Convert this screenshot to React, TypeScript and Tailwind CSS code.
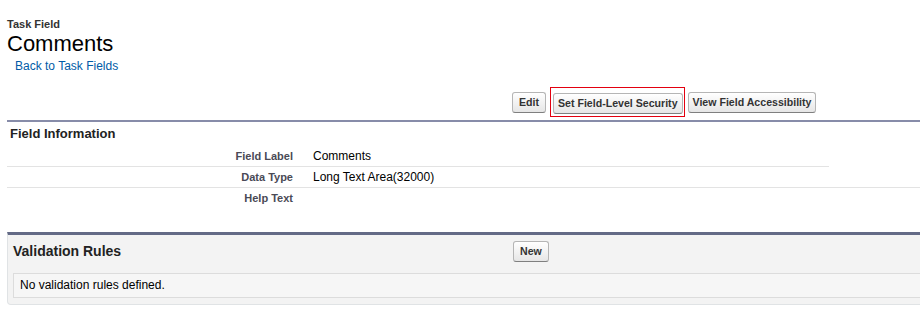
export default function App() {
  const btn =
    "rounded-[3px] border border-[#b5b5b5] border-b-[#7f7f7f] bg-gradient-to-b from-white to-[#e6e6e6] text-[10.6px] font-bold leading-[19px] text-[#333]";

  const rows = [
    { label: "Field Label", value: "Comments", line: "w-[822px]" },
    { label: "Data Type", value: "Long Text Area(32000)", line: "w-[913px]" },
    { label: "Help Text", value: "", line: "" },
  ];

  return (
    <div className="h-[317px] w-[920px] overflow-hidden bg-white font-['Liberation_Sans',Arial,sans-serif] text-black">
      {/* page header */}
      <div className="pl-[7px] pt-[18px]">
        <div className="text-[11px] font-bold leading-[13px] text-[#333]">Task Field</div>
        <div className="text-[22px] leading-[26px] text-black">Comments</div>
        <a className="ml-[8px] mt-[2px] block text-[12px] leading-[14px] text-[#015ba7]">Back to Task Fields</a>
      </div>

      {/* buttons */}
      <div className="mt-[14px] flex items-center pl-[512px]">
        <button className={"px-[6px] " + btn}>Edit</button>
        <div className="ml-[4px] border border-[#e3000f] py-[2px] pl-[2px] pr-[1px]">
          <button className={"px-[4px] " + btn}>Set Field-Level Security</button>
        </div>
        <button className={"ml-[3px] px-[4px] " + btn}>View Field Accessibility</button>
      </div>

      {/* field information */}
      <div className="ml-[7px] mt-[3px] border-t-2 border-[#878ca9]">
        <div className="pl-[3px] pt-[4px] text-[13px] font-bold leading-[15px] text-[#222]">Field Information</div>
        <div className="mt-[5px]">
          {rows.map((r) => (
            <div key={r.label}>
              <div className="flex h-[20px] items-center">
                <div className="w-[286px] text-right text-[11px] font-bold text-[#4a4a56]">{r.label}</div>
                <div className="pl-[20px] text-[12px] text-black">{r.value}</div>
              </div>
              {r.line && <div className={"h-px bg-[#e3e3e3] " + r.line}></div>}
            </div>
          ))}
        </div>
      </div>

      {/* validation rules */}
      <div className="ml-[7px] mt-[24px] w-[930px] rounded-b-[4px] border-x border-b border-t-[3px] border-[#e0e3e5] border-t-[#636a86] bg-[#f3f3f3] pb-[6px]">
        <div className="mb-[6px] flex h-[32px] items-center">
          <div className="w-[505px] pl-[5px] text-[14px] font-bold text-[#222]">Validation Rules</div>
          <button className={"px-[6px] leading-[16px] " + btn}>New</button>
        </div>
        <div className="ml-[5px] border border-[#dcdcdc] bg-[#f6f6f6] pl-[6px] text-[12px] leading-[23px] text-black">
          No validation rules defined.
        </div>
      </div>
    </div>
  );
}
